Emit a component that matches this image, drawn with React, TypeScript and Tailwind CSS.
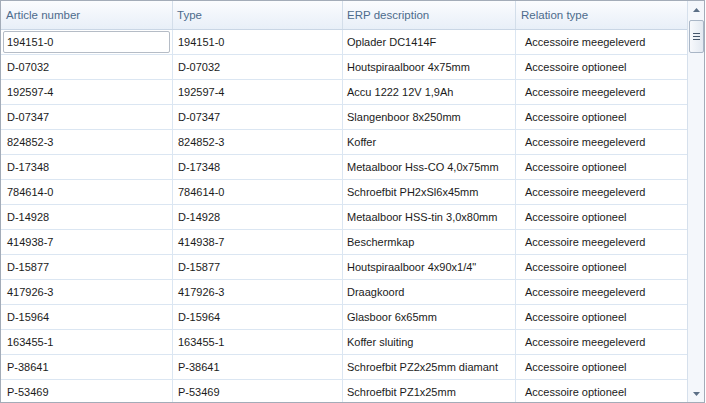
const rows: [string, string, string][] = [
  ['194151-0', 'Oplader DC1414F', 'Accessoire meegeleverd'],
  ['D-07032', 'Houtspiraalboor 4x75mm', 'Accessoire optioneel'],
  ['192597-4', 'Accu 1222 12V 1,9Ah', 'Accessoire meegeleverd'],
  ['D-07347', 'Slangenboor 8x250mm', 'Accessoire optioneel'],
  ['824852-3', 'Koffer', 'Accessoire meegeleverd'],
  ['D-17348', 'Metaalboor Hss-CO 4,0x75mm', 'Accessoire optioneel'],
  ['784614-0', 'Schroefbit PH2xSl6x45mm', 'Accessoire meegeleverd'],
  ['D-14928', 'Metaalboor HSS-tin 3,0x80mm', 'Accessoire optioneel'],
  ['414938-7', 'Beschermkap', 'Accessoire meegeleverd'],
  ['D-15877', 'Houtspiraalboor 4x90x1/4"', 'Accessoire optioneel'],
  ['417926-3', 'Draagkoord', 'Accessoire meegeleverd'],
  ['D-15964', 'Glasboor 6x65mm', 'Accessoire optioneel'],
  ['163455-1', 'Koffer sluiting', 'Accessoire meegeleverd'],
  ['P-38641', 'Schroefbit PZ2x25mm diamant', 'Accessoire optioneel'],
  ['P-53469', 'Schroefbit PZ1x25mm', 'Accessoire optioneel'],
]

const cols = 'grid grid-cols-[172px_170px_173px_171px]'

export default function App() {
  return (
    <div
      className="w-[706px] h-[403px] bg-white overflow-hidden text-[11px] text-[#1b1b1b]"
      style={{ fontFamily: '"Liberation Sans", Arial, sans-serif' }}
    >
      <div className="w-[705px] h-[403px] border border-[#a3acb8] flex">
        <div className="w-[686px] flex flex-col overflow-hidden">
          {/* header */}
          <div className={`${cols} h-[29px] shrink-0 bg-gradient-to-b from-[#fbfcfe] to-[#e8eff8] border-b border-[#c9d6e5] text-[#4d6b8c] text-[11.5px]`}>
            <div className="pl-[5px] pt-[1px] flex items-center border-r border-[#d3deea]">Article number</div>
            <div className="pl-[4px] pt-[1px] flex items-center border-r border-[#d3deea]">Type</div>
            <div className="pl-[4px] pt-[1px] flex items-center border-r border-[#d3deea]">ERP description</div>
            <div className="pl-[5px] pt-[1px] flex items-center">Relation type</div>
          </div>
          {/* rows */}
          {rows.map(([num, desc, rel], i) => (
            <div key={i} className={`${cols} h-[25px] shrink-0 border-b border-[#dbe6f2]`}>
              <div className="flex items-center border-r border-[#dbe6f2] px-[2px]">
                {i === 0 ? (
                  <div className="w-full h-[22px] border border-[#b5bcc6] rounded-[2px] flex items-center pl-[3px]">
                    {num}
                  </div>
                ) : (
                  <span className="pl-[4px]">{num}</span>
                )}
              </div>
              <div className="flex items-center border-r border-[#dbe6f2] pl-[5px]">{num}</div>
              <div className="flex items-center border-r border-[#dbe6f2] pl-[4px]">{desc}</div>
              <div className="flex items-center pl-[9px]">{rel}</div>
            </div>
          ))}
        </div>
        {/* scrollbar */}
        <div className="w-[17px] border-l border-[#d6e0ec] bg-[#f4f7fb] flex flex-col items-center">
          <div className="h-[17px] w-full flex items-center justify-center">
            <svg width="7" height="4" viewBox="0 0 7 4">
              <path d="M0 4 L3.5 0 L7 4 Z" fill="#5b6f86" />
            </svg>
          </div>
          <div className="mt-[2px] w-[15px] h-[33px] rounded-[2px] border border-[#a9b6c6] bg-gradient-to-r from-[#f7f9fc] to-[#e3e9f1] flex flex-col items-center justify-center gap-[2px]">
            <div className="w-[7px] h-[1px] bg-[#44556a]" />
            <div className="w-[7px] h-[1px] bg-[#44556a]" />
            <div className="w-[7px] h-[1px] bg-[#44556a]" />
          </div>
          <div className="flex-1" />
          <div className="h-[17px] w-full flex items-center justify-center">
            <svg width="7" height="4" viewBox="0 0 7 4">
              <path d="M0 0 L7 0 L3.5 4 Z" fill="#5b6f86" />
            </svg>
          </div>
        </div>
      </div>
    </div>
  )
}
